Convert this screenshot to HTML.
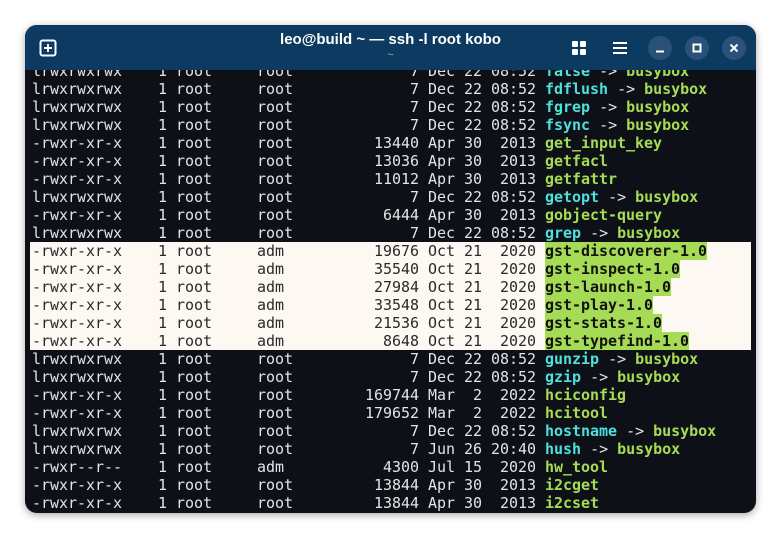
<!DOCTYPE html>
<html><head><meta charset="utf-8"><style>
html,body{margin:0;padding:0;background:#fff;width:782px;height:539px;overflow:hidden}
.win{position:absolute;left:25px;top:25px;width:731px;height:488px;border-radius:12px;background:#0d1017;overflow:hidden;box-shadow:0 2px 8px rgba(0,0,0,.35)}
.hl{position:absolute;left:5px;top:217px;width:721px;height:108px;background:#fdf8f1}
pre{position:absolute;left:7px;top:37px;margin:0;font:15px/18px "DejaVu Sans Mono","Liberation Mono",monospace;letter-spacing:-0.03px;color:#e4e4e4}
.c{color:#4fe0dc;font-weight:bold}.g{color:#a6dc55;font-weight:bold}
.d{color:#2a2a2a}.gb{background:#a6dc55;color:#111;font-weight:bold}
.hdr{position:absolute;left:0;top:0;width:731px;height:45px;background:#0c3a61}
.t{position:absolute;left:0;width:731px;text-align:center;color:#fff;font-family:"Liberation Sans",sans-serif}
.btn{position:absolute;top:11px;width:24px;height:24px;border-radius:50%;background:#2a5178}
</style></head><body>
<div class="win">
<div class="hl"></div>
<pre>lrwxrwxrwx    1 root     root             7 Dec 22 08:52 <span class="c">false</span> -&gt; <span class="g">busybox</span>
lrwxrwxrwx    1 root     root             7 Dec 22 08:52 <span class="c">fdflush</span> -&gt; <span class="g">busybox</span>
lrwxrwxrwx    1 root     root             7 Dec 22 08:52 <span class="c">fgrep</span> -&gt; <span class="g">busybox</span>
lrwxrwxrwx    1 root     root             7 Dec 22 08:52 <span class="c">fsync</span> -&gt; <span class="g">busybox</span>
-rwxr-xr-x    1 root     root         13440 Apr 30  2013 <span class="g">get_input_key</span>
-rwxr-xr-x    1 root     root         13036 Apr 30  2013 <span class="g">getfacl</span>
-rwxr-xr-x    1 root     root         11012 Apr 30  2013 <span class="g">getfattr</span>
lrwxrwxrwx    1 root     root             7 Dec 22 08:52 <span class="c">getopt</span> -&gt; <span class="g">busybox</span>
-rwxr-xr-x    1 root     root          6444 Apr 30  2013 <span class="g">gobject-query</span>
lrwxrwxrwx    1 root     root             7 Dec 22 08:52 <span class="c">grep</span> -&gt; <span class="g">busybox</span>
<span class="d">-rwxr-xr-x    1 root     adm          19676 Oct 21  2020 </span><span class="gb">gst-discoverer-1.0</span>
<span class="d">-rwxr-xr-x    1 root     adm          35540 Oct 21  2020 </span><span class="gb">gst-inspect-1.0</span>
<span class="d">-rwxr-xr-x    1 root     adm          27984 Oct 21  2020 </span><span class="gb">gst-launch-1.0</span>
<span class="d">-rwxr-xr-x    1 root     adm          33548 Oct 21  2020 </span><span class="gb">gst-play-1.0</span>
<span class="d">-rwxr-xr-x    1 root     adm          21536 Oct 21  2020 </span><span class="gb">gst-stats-1.0</span>
<span class="d">-rwxr-xr-x    1 root     adm           8648 Oct 21  2020 </span><span class="gb">gst-typefind-1.0</span>
lrwxrwxrwx    1 root     root             7 Dec 22 08:52 <span class="c">gunzip</span> -&gt; <span class="g">busybox</span>
lrwxrwxrwx    1 root     root             7 Dec 22 08:52 <span class="c">gzip</span> -&gt; <span class="g">busybox</span>
-rwxr-xr-x    1 root     root        169744 Mar  2  2022 <span class="g">hciconfig</span>
-rwxr-xr-x    1 root     root        179652 Mar  2  2022 <span class="g">hcitool</span>
lrwxrwxrwx    1 root     root             7 Dec 22 08:52 <span class="c">hostname</span> -&gt; <span class="g">busybox</span>
lrwxrwxrwx    1 root     root             7 Jun 26 20:40 <span class="c">hush</span> -&gt; <span class="g">busybox</span>
-rwxr--r--    1 root     adm           4300 Jul 15  2020 <span class="g">hw_tool</span>
-rwxr-xr-x    1 root     root         13844 Apr 30  2013 <span class="g">i2cget</span>
-rwxr-xr-x    1 root     root         13844 Apr 30  2013 <span class="g">i2cset</span></pre>
<div class="hdr">
 <svg style="position:absolute;left:14px;top:14px" width="18" height="18" viewBox="0 0 18 18"><rect x="1.5" y="1.5" width="15" height="15" rx="2" fill="none" stroke="#fff" stroke-width="2"/><path d="M9 5v8M5 9h8" stroke="#fff" stroke-width="2"/></svg>
 <div class="t" style="top:6px;font-size:15px;font-weight:bold">leo@build ~ — ssh -l root kobo</div>
 <div class="t" style="top:24px;font-size:11px;color:#9fb4c8">~</div>
 <svg style="position:absolute;left:546px;top:15px" width="16" height="16"><rect x="1" y="1" width="6" height="6" rx="1" fill="#fff"/><rect x="9" y="1" width="6" height="6" rx="1" fill="#fff"/><rect x="1" y="9" width="6" height="6" rx="1" fill="#fff"/><rect x="9" y="9" width="6" height="6" rx="1" fill="#fff"/></svg>
 <svg style="position:absolute;left:587px;top:15px" width="16" height="16"><path d="M1 3h14M1 8h14M1 13h14" stroke="#fff" stroke-width="2"/></svg>
 <div class="btn" style="left:623px"><svg width="24" height="24"><path d="M8 15.5h8" stroke="#fff" stroke-width="2"/></svg></div>
 <div class="btn" style="left:660px"><svg width="24" height="24"><rect x="8.5" y="8.5" width="7" height="7" fill="none" stroke="#fff" stroke-width="2"/></svg></div>
 <div class="btn" style="left:697px"><svg width="24" height="24"><path d="M8.5 8.5l7 7M15.5 8.5l-7 7" stroke="#fff" stroke-width="2"/></svg></div>
</div>
</div>
</body></html>
